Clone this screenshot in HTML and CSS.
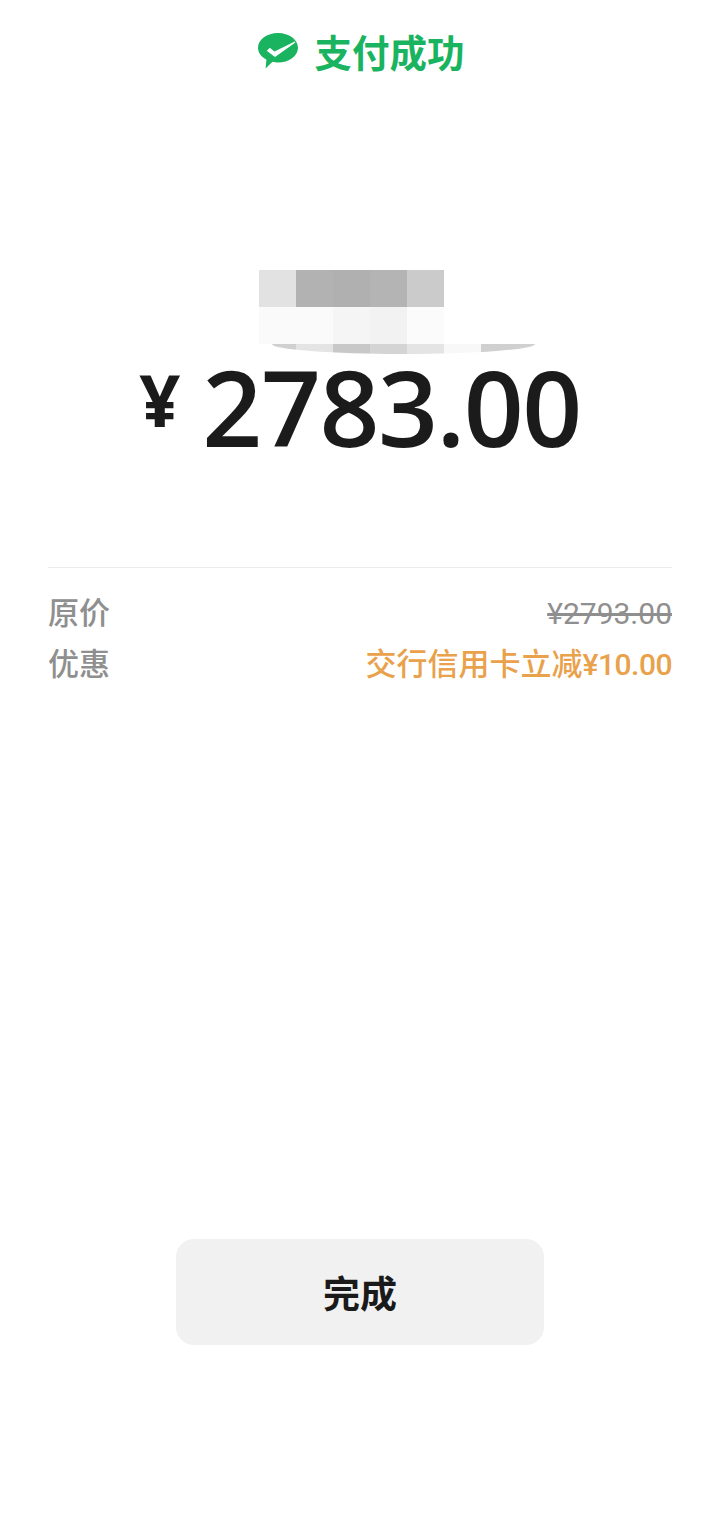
FILE: index.html
```html
<!DOCTYPE html>
<html lang="zh-CN">
<head>
<meta charset="utf-8">
<title>支付成功</title>
<link rel="stylesheet" href="styles.css">
</head>
<body>
<main class="page">
  <header class="status">
    <svg class="status-icon" viewBox="0 0 40 36" aria-hidden="true">
      <path class="bubble" d="M20 0C31 0 40 6.500 40 14.700C40 22.900 31 29.500 20 29.500C18 29.500 16.200 29.300 14.400 28.800L7.600 35.600L8.400 26.500C3.300 23.800 0 19.500 0 14.700C0 6.500 9 0 20 0Z"/>
      <path class="tick" d="M8.800 17.800L11.800 14.800L16.500 18.400L36.800 8.600L37.400 9.600L17 24Z"/>
    </svg>
    <h1 class="status-text">支付成功</h1>
  </header>

  <section class="payee" aria-hidden="true">
    <div class="mosaic-row">
      <i class="cell c-e2"></i><i class="cell c-b2"></i><i class="cell c-b0"></i><i class="cell c-b4"></i><i class="cell c-cb"></i>
    </div>
    <div class="mosaic-row">
      <i class="cell c-fa"></i><i class="cell c-fa"></i><i class="cell c-f5"></i><i class="cell c-f2"></i><i class="cell c-fb"></i>
    </div>
    <div class="mosaic-lens">
      <i class="lens-cell lens-start"></i><i class="lens-cell c-e4"></i><i class="lens-cell c-c8"></i><i class="lens-cell c-d4"></i><i class="lens-cell c-e4"></i><i class="lens-cell c-f8"></i><i class="lens-cell lens-end"></i>
    </div>
  </section>

  <section class="amount">
    <span class="amount-currency">¥</span>
    <span class="amount-value">2783.00</span>
  </section>

  <section class="details">
    <div class="detail-row">
      <span class="detail-label">原价</span>
      <span class="detail-original">¥2793.00</span>
    </div>
    <div class="detail-row">
      <span class="detail-label">优惠</span>
      <span class="detail-discount">交行信用卡立减<span class="detail-figure">¥10.00</span></span>
    </div>
  </section>

  <button class="done" type="button">完成</button>
</main>
</body>
</html>
```
FILE: styles.css
```css
* {
  box-sizing: border-box;
}

html,
body {
  margin: 0;
  background: #fff;
}

body {
  font-family: "Roboto", "Noto Sans CJK SC", sans-serif;
}

.page {
  display: flex;
  flex-direction: column;
  min-height: 1524px;
  padding: 33px 48px 0;
}

/* Status line */
.status {
  display: flex;
  align-items: flex-start;
  justify-content: center;
  gap: 17px;
  height: 40px;
  padding-left: 2px;
}

.status-icon {
  width: 40px;
  height: 36px;
  flex: none;
}

.bubble {
  fill: #1ab35f;
}

.tick {
  fill: #fff;
}

.status-text {
  margin: 0;
  font-family: "Noto Sans CJK SC", sans-serif;
  font-size: 37.500px;
  line-height: 36px;
  font-weight: 700;
  color: #1ab35f;
}

/* Pixelated payee name */
.payee {
  margin: 197px 0 0 211px;
  width: 330px;
}

.mosaic-row {
  display: flex;
  height: 37px;
}

.cell {
  width: 37px;
  flex: none;
}

.mosaic-lens {
  display: flex;
  width: 263px;
  height: 10px;
  margin-left: 13px;
  overflow: hidden;
  border-radius: 0 0 50% 50% / 0 0 100% 100%;
}

.lens-cell {
  width: 37px;
  flex: none;
}

.lens-start {
  width: 24px;
  background: #d0d0d0;
}

.lens-end {
  width: 54px;
  background: #d0d0d0;
}

.c-b0 { background: #b0b0b0; }
.c-b2 { background: #b2b2b2; }
.c-b4 { background: #b4b4b4; }
.c-c8 { background: #c8c8c8; }
.c-cb { background: #cbcbcb; }
.c-d4 { background: #d4d4d4; }
.c-e2 { background: #e2e2e2; }
.c-e4 { background: #e4e4e4; }
.c-f2 { background: #f2f2f2; }
.c-f5 { background: #f5f5f5; }
.c-f8 { background: #f8f8f8; }
.c-fa { background: #fafafa; }
.c-fb { background: #fbfbfb; }

/* Paid amount */
.amount {
  display: flex;
  align-items: flex-start;
  justify-content: center;
  gap: 22px;
  height: 118px;
  margin-top: -2px;
  color: #1b1b1b;
  font-family: "Open Sans", sans-serif;
}

.amount-currency {
  font-size: 72px;
  line-height: 72px;
  font-weight: 700;
  margin-top: 11px;
}

.amount-value {
  font-size: 105px;
  line-height: 110px;
  font-weight: 600;
  letter-spacing: -1.500px;
}

/* Price breakdown */
.details {
  margin-top: 97px;
  padding-top: 25px;
  border-top: 1px solid #ebebeb;
  display: flex;
  flex-direction: column;
  gap: 9px;
}

.detail-row {
  display: flex;
  justify-content: space-between;
  height: 42px;
  font-size: 31px;
  line-height: 42px;
  font-weight: 500;
}

.detail-label {
  color: #8f8f8f;
}

.detail-original {
  color: #8f8f8f;
  font-size: 30px;
  font-weight: 400;
  text-decoration: line-through;
}

.detail-discount {
  color: #e9a14b;
}

.detail-figure {
  font-size: 30px;
  font-weight: 500;
  letter-spacing: -0.500px;
}

/* Primary action */
.done {
  align-self: center;
  width: 368px;
  height: 106px;
  margin-top: 553px;
  border: 0;
  border-radius: 18px;
  background: #f1f1f1;
  color: #1a1a1a;
  font-family: "Noto Sans CJK SC", sans-serif;
  font-size: 37px;
  font-weight: 700;
}
```
